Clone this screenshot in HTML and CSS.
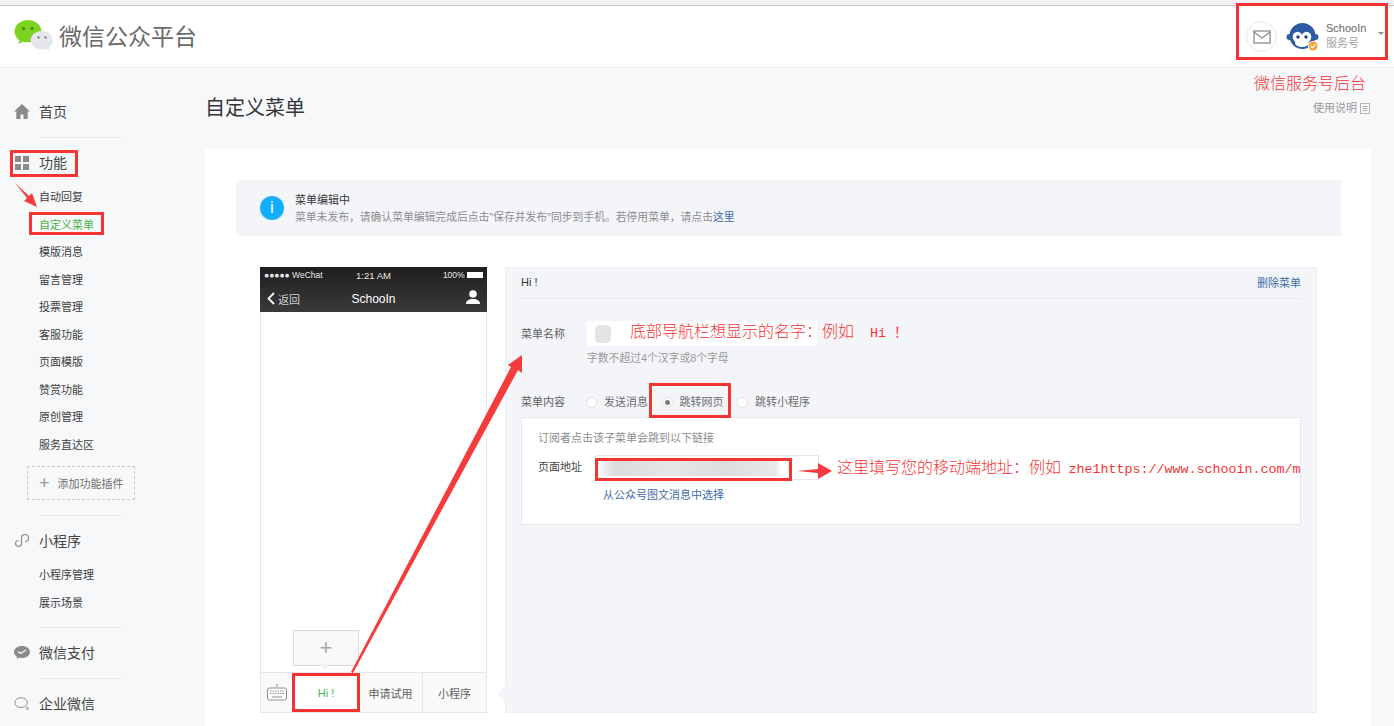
FILE: index.html
```html
<!DOCTYPE html>
<html lang="zh-CN">
<head>
  <meta charset="UTF-8" />
  <title>微信公众平台</title>
  <link rel="stylesheet" href="styles.css">
</head>
<body>
  <div class="top-strip"></div>

  <!-- 顶部 -->
  <header class="header">
    <div class="brand">
      <svg class="brand-logo" width="40" height="36" viewBox="0 0 40 36">
        <path d="M14 1C6.500 1 0.500 6 0.500 12.500c0 3.700 2 6.800 5 8.900L4.300 25l4.600-2.300c1.600 .4 3.300 .6 5.100 .6 7.500 0 13.500-5 13.500-10.800S21.500 1 14 1z" fill="#7ed321"/>
        <circle cx="9.500" cy="9.500" r="1.600" fill="#3c8a12"/>
        <circle cx="18" cy="9.500" r="1.600" fill="#3c8a12"/>
        <path d="M28 12c-6.200 0-11.200 4.100-11.200 9.300S21.800 30.600 28 30.600c1.300 0 2.500-.2 3.600-.5l3.800 2-1-3.200c2.700-1.700 4.500-4.400 4.500-7.600C38.900 16.100 34.200 12 28 12z" fill="#e6e7ea"/>
        <circle cx="24.500" cy="18.500" r="1.300" fill="#8b8b8b"/>
        <circle cx="31.500" cy="18.500" r="1.300" fill="#8b8b8b"/>
      </svg>
      <span class="brand-name">微信公众平台</span>
    </div>
    <div class="account">
      <span class="mail-btn">
        <svg width="18" height="14" viewBox="0 0 18 14" fill="none" stroke="#8c8c8c" stroke-width="1.300">
          <rect x="1" y="1" width="16" height="12"/>
          <path d="M1 2l8 6 8-6"/>
        </svg>
      </span>
      <svg class="avatar" width="34" height="30" viewBox="0 0 34 30">
        <circle cx="3.500" cy="15" r="3" fill="#2c5aa5"/>
        <circle cx="29.500" cy="15" r="3" fill="#2c5aa5"/>
        <circle cx="16.500" cy="14" r="13" fill="#2c5aa5"/>
        <ellipse cx="11.500" cy="15" rx="4.800" ry="5.200" fill="#fff"/>
        <ellipse cx="20.500" cy="15" rx="4.800" ry="5.200" fill="#fff"/>
        <ellipse cx="16" cy="21" rx="7" ry="4" fill="#fff"/>
        <circle cx="12" cy="15" r="1.700" fill="#1d3f78"/>
        <circle cx="20" cy="15" r="1.700" fill="#1d3f78"/>
        <circle cx="27" cy="24" r="5.300" fill="#fff"/>
        <circle cx="27" cy="24" r="4.500" fill="#f3a33a"/>
        <path d="M24.700 24l1.700 1.700 3-3.200" fill="none" stroke="#fff" stroke-width="1.200"/>
      </svg>
      <div class="account-text">
        <div class="account-name">SchooIn</div>
        <div class="account-type">服务号</div>
      </div>
      <span class="caret"></span>
    </div>
  </header>

  <div class="layout">
    <!-- 左侧菜单 -->
    <nav class="sidebar">
      <div class="nav-head">
        <svg class="nav-icon" width="16" height="15" viewBox="0 0 16 15"><path d="M8 0L0 7.500h2.300V15h4.200v-4.500h3V15h4.200V7.500H16z" fill="#8a8a8a"/></svg>
        首页
      </div>
      <div class="nav-line"></div>
      <div class="nav-head">
        <svg class="nav-icon" width="16" height="15" viewBox="0 0 16 15" fill="#8a8a8a"><rect x="1" y="1" width="6" height="6"/><rect x="9" y="1" width="6" height="6"/><rect x="1" y="9" width="6" height="6"/><rect x="9" y="9" width="6" height="6"/></svg>
        功能
      </div>
      <ul class="nav-sub">
        <li>自动回复</li>
        <li class="active">自定义菜单</li>
        <li>模版消息</li>
        <li>留言管理</li>
        <li>投票管理</li>
        <li>客服功能</li>
        <li>页面模版</li>
        <li>赞赏功能</li>
        <li>原创管理</li>
        <li>服务直达区</li>
      </ul>
      <div class="add-plugin"><span class="add-plus">+</span>添加功能插件</div>
      <div class="nav-line"></div>
      <div class="nav-head">
        <svg class="nav-icon" width="16" height="15" viewBox="0 0 16 15" fill="none" stroke="#8a8a8a" stroke-width="1.200"><path d="M7.500 5v5.500a3 3 0 1 1-3-3"/><path d="M7.500 5a3.500 3.500 0 1 1 3.500 3.500"/></svg>
        小程序
      </div>
      <ul class="nav-sub nav-sub-short">
        <li>小程序管理</li>
        <li>展示场景</li>
      </ul>
      <div class="nav-line"></div>
      <div class="nav-head">
        <svg class="nav-icon" width="16" height="13" viewBox="0 0 16 13"><path d="M8 0C3.600 0 0 2.700 0 6c0 1.900 1.200 3.600 3 4.700L2.700 13l2.600-1.500c.9 .3 1.800 .5 2.700 .5 4.400 0 8-2.700 8-6S12.400 0 8 0z" fill="#8a8a8a"/><path d="M4 5.500l2.500 2L12 4" fill="none" stroke="#f6f8f9" stroke-width="1.300"/></svg>
        微信支付
      </div>
      <div class="nav-line"></div>
      <div class="nav-head">
        <svg class="nav-icon" width="18" height="15" viewBox="0 0 18 15" fill="none" stroke="#8a8a8a" stroke-width="1.100"><ellipse cx="8" cy="6.500" rx="7" ry="5.500"/><circle cx="15" cy="13" r="1.200"/></svg>
        企业微信
      </div>
    </nav>

    <!-- 内容 -->
    <main class="main">
      <div class="page-head">
        <h1 class="page-title">自定义菜单</h1>
        <div class="page-help">使用说明
          <svg width="10" height="11" viewBox="0 0 10 11" fill="none" stroke="#b5b5b5"><rect x=".5" y=".5" width="9" height="10"/><path d="M2.500 3.500h5M2.500 5.500h5M2.500 7.500h5"/></svg>
        </div>
      </div>

      <section class="card">
        <div class="notice">
          <span class="notice-icon">i</span>
          <div class="notice-body">
            <div class="notice-title">菜单编辑中</div>
            <div class="notice-text">菜单未发布，请确认菜单编辑完成后点击"保存并发布"同步到手机。若停用菜单，请点击<a class="link">这里</a></div>
          </div>
        </div>

        <div class="editor-wrap">
          <div class="phone">
            <div class="phone-top">
              <div class="phone-status">
                <span class="status-left">●●●●● WeChat</span>
                <span class="status-time">1:21 AM</span>
                <span class="status-right">100% <i class="battery"></i></span>
              </div>
              <div class="phone-nav">
                <span class="phone-back">
                  <svg width="8" height="13" viewBox="0 0 8 13" fill="none" stroke="#fff" stroke-width="1.800"><path d="M7 1L1.500 6.500 7 12"/></svg>
                  返回
                </span>
                <span class="phone-title">SchooIn</span>
                <svg class="phone-user" width="14" height="14" viewBox="0 0 14 14" fill="#fff"><circle cx="7" cy="4" r="3.800"/><path d="M0 14c0-3.500 3-4.500 5-5h4c2 .5 5 1.500 5 5z"/></svg>
              </div>
            </div>
            <div class="phone-body">
              <div class="sub-add">+</div>
            </div>
            <div class="phone-tabs">
              <div class="tab tab-key">
                <svg width="20" height="17" viewBox="0 0 20 17" fill="none" stroke="#8e8e8e"><path d="M10 0v3"/><rect x=".5" y="4" width="19" height="12" rx="2" fill="#fff"/><path d="M3 7h14M3 9.500h14" stroke-dasharray="1.500 1"/><path d="M5 13h10"/></svg>
              </div>
              <div class="tab tab-on">Hi !</div>
              <div class="tab tab-mid">申请试用</div>
              <div class="tab tab-last">小程序</div>
            </div>
          </div>

          <div class="editor">
            <div class="editor-head">
              <span>Hi !</span>
              <a class="link">删除菜单</a>
            </div>
            <div class="form-row form-name">
              <label class="form-label">菜单名称</label>
              <div class="name-input"><span class="name-blur"></span></div>
            </div>
            <p class="form-hint">字数不超过4个汉字或8个字母</p>
            <div class="form-row form-radio">
              <label class="form-label">菜单内容</label>
              <span class="radio"></span><span class="radio-text">发送消息</span>
              <span class="radio radio-on"></span><span class="radio-text">跳转网页</span>
              <span class="radio"></span><span class="radio-text">跳转小程序</span>
            </div>
            <div class="sub-panel">
              <p class="panel-tip">订阅者点击该子菜单会跳到以下链接</p>
              <div class="form-row">
                <label class="panel-label">页面地址</label>
                <div class="url-input"><span class="url-blur"></span></div>
              </div>
              <a class="link panel-link">从公众号图文消息中选择</a>
            </div>
          </div>
        </div>
      </section>
    </main>
  </div>

  <!-- 标注 -->
  <div class="mark mark-account"></div>
  <div class="mark mark-func"></div>
  <div class="mark mark-menu"></div>
  <div class="mark mark-web"></div>
  <div class="mark mark-url"></div>
  <div class="mark mark-hi"></div>
  <svg class="arrows" width="1394" height="726" viewBox="0 0 1394 726" fill="#f53b3b">
    <path d="M15 183L29 196 32 193 37 207 24 201 27 198z"/>
    <path d="M351 672L511 367 508 365 522 355 522 373 518 370 353 673z"/>
    <path d="M797 471L818 469 818 463 832 471 818 479 818 473z"/>
  </svg>
  <div class="note note-account">微信服务号后台</div>
  <div class="note note-name">底部导航栏想显示的名字：例如<span class="note-en">  Hi ！</span></div>
  <div class="note note-url">这里填写您的移动端地址：例如 <span class="note-en note-addr">zhe1https://www.schooin.com/m</span></div>
</body>
</html>
```

FILE: styles.css
```css
* { box-sizing: border-box; margin: 0; padding: 0; }
html, body { height: 726px; overflow: hidden; }
body {
  position: relative;
  font-family: "Liberation Sans", "Noto Sans CJK SC", sans-serif;
  background: #f6f8f9;
  color: #353535;
  font-size: 11px;
}
ul { list-style: none; }

.top-strip {
  height: 6px;
  background: #f2f2f2;
  border-bottom: 1px solid #c9c9c9;
}

.header {
  height: 62px;
  background: #fff;
  border-bottom: 1px solid #eceef0;
  display: flex;
  justify-content: space-between;
  align-items: center;
}
.brand { display: flex; align-items: center; padding-left: 14px; }
.brand-logo { margin-right: 5px; }
.brand-name { font-size: 23px; color: #6a6a6a; padding-bottom: 4px; }

.account { display: flex; align-items: center; padding-right: 10px; }
.mail-btn {
  width: 31px;
  height: 31px;
  border: 1px solid #e7e7eb;
  border-radius: 50%;
  display: flex;
  align-items: center;
  justify-content: center;
  margin-right: 9px;
}
.avatar { margin-right: 6px; }
.account-text { width: 52px; line-height: 15px; padding-bottom: 2px; }
.account-name { font-size: 11px; color: #666; }
.account-type { color: #a3a3a3; }
.caret {
  width: 0;
  height: 0;
  border-left: 3px solid transparent;
  border-right: 3px solid transparent;
  border-top: 3px solid #8d8d8d;
  margin-bottom: 6px;
}

.layout { display: flex; }

.sidebar { width: 205px; padding-top: 30px; flex-shrink: 0; }
.nav-head {
  height: 28px;
  display: flex;
  align-items: center;
  padding: 0 0 2px 14px;
  font-size: 14px;
  color: #454545;
}
.nav-icon { margin-right: 9px; width: 16px; }
.nav-line {
  width: 83px;
  height: 1px;
  background: #e7e7eb;
  margin: 11px 0 11px 39px;
}
.nav-sub { margin-top: 6px; }
.nav-sub li { height: 27.5px; line-height: 29.5px; padding-left: 39px; color: #3e3e3e; }
.nav-sub .active { color: #44b549; }
.nav-sub-short { margin-top: 6px; }
.add-plugin {
  width: 108px;
  height: 34px;
  margin: 8px 0 15px 27px;
  border: 1px dashed #c9c9c9;
  display: flex;
  align-items: center;
  padding-left: 11px;
  color: #6f6f6f;
}
.add-plus { font-size: 18px; font-weight: 300; color: #9a9a9a; margin-right: 8px; line-height: 1; }

.main { flex: 1; padding-top: 26px; }
.page-head {
  height: 55px;
  display: flex;
  justify-content: space-between;
  padding-right: 23px;
}
.page-title { font-size: 20px; font-weight: 400; line-height: 28px; height: 28px; color: #353535; }
.page-help { color: #9a9a9a; line-height: 28px; height: 28px; padding-right: 1px; }
.page-help svg { vertical-align: -2px; }

.card {
  margin-right: 23px;
  height: 600px;
  background: #fff;
  border-radius: 3px;
  padding: 31px 30px 0 31px;
}
.notice {
  height: 56px;
  background: #f4f5f9;
  display: flex;
  align-items: center;
  padding-left: 24px;
  line-height: 17px;
}
.notice-icon {
  width: 24px;
  height: 24px;
  border-radius: 50%;
  background: #10aeff;
  color: #fff;
  font-size: 17px;
  line-height: 24px;
  text-align: center;
  margin-right: 11px;
}
.notice-body { padding-top: 2px; }
.notice-title { color: #353535; }
.notice-text { color: #8d8d8d; font-size: 10.8px; }
.link { color: #3f6ba8; }

.editor-wrap { display: flex; padding: 31px 24px 0; gap: 18px; }

.phone {
  width: 227px;
  height: 446px;
  border: 1px solid #e7e7eb;
  border-top: 0;
  display: flex;
  flex-direction: column;
}
.phone-top { height: 45px; background: linear-gradient(#1f1f1f, #3a3a3a); color: #fff; margin: 0 -1px; }
.phone-status {
  height: 16px;
  display: flex;
  align-items: center;
  justify-content: space-between;
  font-size: 8.5px;
  padding: 0 4px;
  color: #e6e6e6;
}
.status-left, .status-right { width: 74px; }
.status-right { text-align: right; }
.status-time { font-size: 9.5px; }
.battery { display: inline-block; width: 16px; height: 6px; background: #fff; vertical-align: 0; }
.phone-nav {
  height: 29px;
  display: flex;
  align-items: center;
  justify-content: space-between;
  padding: 2px 7px 0;
}
.phone-back { width: 70px; font-size: 11px; color: #d0d0d0; display: flex; align-items: center; gap: 3px; }
.phone-title { font-size: 12px; margin-top: 1px; }
.phone-user { margin-left: 56px; margin-top: -3px; }

.phone-body { flex: 1; position: relative; }
.sub-add {
  position: absolute;
  left: 32px;
  bottom: 6px;
  width: 66px;
  height: 36px;
  background: #f9f9f9;
  border: 1px solid #d9dadc;
  text-align: center;
  font-size: 22px;
  font-weight: 300;
  line-height: 33px;
  color: #a8a8a8;
}
.sub-add::after {
  content: "";
  position: absolute;
  left: 28px;
  bottom: -4px;
  width: 6px;
  height: 6px;
  background: #f3f3f3;
  transform: rotate(45deg);
}
.phone-tabs {
  height: 40px;
  display: flex;
  background: #fafafa;
  border-top: 1px solid #e7e7eb;
  color: #616161;
  font-size: 11px;
}
.tab { display: flex; align-items: center; justify-content: center; }
.tab-key { width: 32px; }
.tab-on { width: 66px; background: #fff; color: #44b549; border: 1px solid #44b549; }
.tab-mid { width: 64px; border-right: 1px solid #e7e7eb; }
.tab-last { flex: 1; }

.editor {
  flex: 1;
  height: 446px;
  background: #f4f5f9;
  border: 1px solid #eceef3;
  padding: 0 15px;
  position: relative;
}
.editor::before {
  content: "";
  position: absolute;
  left: -9px;
  top: 417px;
  border-top: 9px solid transparent;
  border-bottom: 9px solid transparent;
  border-right: 9px solid #f4f5f9;
}
.editor-head {
  height: 31px;
  border-bottom: 1px solid #e7e7eb;
  display: flex;
  justify-content: space-between;
  align-items: center;
  padding-bottom: 2px;
  color: #353535;
}
.form-row { display: flex; align-items: center; }
.form-label { width: 66px; color: #5f5f5f; padding-bottom: 2px; }
.form-name { margin-top: 22px; }
.name-input {
  width: 230px;
  height: 25px;
  background: #fff;
  display: flex;
  align-items: center;
  padding-left: 8px;
}
.name-blur { width: 16px; height: 18px; background: #e4e4e2; border-radius: 5px; }
.form-hint { margin: 4px 0 0 66px; line-height: 17px; color: #9a9a9a; font-size: 10.8px; }
.form-radio { margin-top: 25px; height: 20px; }
.radio {
  width: 11px;
  height: 11px;
  border-radius: 50%;
  background: #fff;
  border: 1px solid #e1e1e1;
  margin-right: 6px;
  position: relative;
  left: -1px;
}
.radio-text { color: #6c6c6c; width: 58.5px; padding-bottom: 2px; }
.radio-on::after {
  content: "";
  position: absolute;
  left: 2px;
  top: 2px;
  width: 5px;
  height: 5px;
  border-radius: 50%;
  background: #7d7d7d;
}
.sub-panel {
  height: 108px;
  margin-top: 5px;
  background: #fff;
  border: 1px solid #e7e7eb;
  padding: 12px 16px;
}
.panel-tip { color: #8d8d8d; line-height: 16px; }
.sub-panel .form-row { margin-top: 9px; }
.panel-label { width: 57px; color: #454545; padding-bottom: 3px; }
.url-input {
  width: 224px;
  height: 25px;
  background: #fff;
  border: 1px solid #e7e7eb;
  display: flex;
  align-items: center;
}
.url-blur {
  width: 185px;
  height: 17px;
  background: linear-gradient(90deg, #fff, #dcdcdc 10%, #e6e6e6 40%, #dedede 70%, #e8e8e8 97%, #fff);
}
.panel-link { display: block; margin: 7px 0 0 65px; line-height: 16px; }

/* 标注 */
.mark { position: absolute; border: 3px solid #f53333; }
.mark-account { left: 1236px; top: 3px; width: 152px; height: 57px; }
.mark-func { left: 10px; top: 150px; width: 68px; height: 27px; }
.mark-menu { left: 29px; top: 212px; width: 75px; height: 23px; }
.mark-web { left: 649px; top: 383px; width: 82px; height: 35px; }
.mark-url { left: 595px; top: 458px; width: 197px; height: 23px; }
.mark-hi { left: 292px; top: 673px; width: 68px; height: 39px; }
.arrows { position: absolute; left: 0; top: 0; }
.note {
  position: absolute;
  font-size: 16px;
  font-weight: 300;
  line-height: 22px;
  color: #f53333;
  white-space: pre;
}
.note-en { font-family: "Liberation Mono", monospace; font-size: 13.33px; }
.note-addr { margin-left: 3px; }
.note-account { left: 1254px; top: 73px; }
.note-name { left: 630px; top: 321px; }
.note-url { left: 837px; top: 457px; }
```
